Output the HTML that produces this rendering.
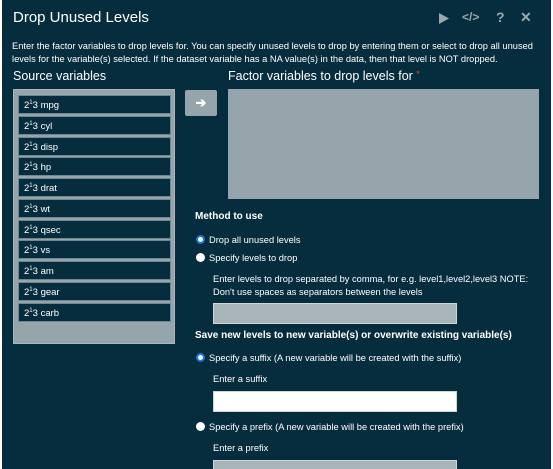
<!DOCTYPE html>
<html><head><style>
*{box-sizing:border-box;margin:0;padding:0}
html,body{width:553px;height:469px;overflow:hidden}
body{background:#fff;font-family:"Liberation Sans",sans-serif;position:relative}
#m{position:absolute;left:2px;top:0;width:549px;height:469px;background:#062d3e;color:#fff;overflow:hidden}
.a{position:absolute;white-space:nowrap}
.t{font-size:15px;left:11px;top:9px}
.d{font-size:9.3px;left:10px;top:40px;line-height:13px}
.h{font-size:12.5px}
#lb{position:absolute;left:11px;top:89px;width:162px;height:255px;background:#95a5ab;border:1px solid #a8b6ba}
.it{position:absolute;left:4px;width:153px;height:19px;background:#062d3e;border:1px solid #6f8790;font-size:9.5px;padding:4px 0 0 5px;line-height:11px}
.it sup{font-size:6px;line-height:0}
#btn{position:absolute;left:183px;top:90px;width:32px;height:26px;background:#95a5ab;border-radius:2px;color:#fff;font-size:13px;text-align:center;line-height:26px;font-weight:bold}
#rb{position:absolute;left:226px;top:89px;width:311px;height:110px;background:#95a5ab}
.s{font-size:9.3px}
.r{position:absolute;width:9px;height:9px;border-radius:50%;background:#fff}
.r.on{border:2.5px solid #1a73e8}
.in{position:absolute;left:211px;width:244px;height:21px;border:1px solid #cfd6d8}
</style></head><body><div id="m">
<div class="a t">Drop Unused Levels</div>
<svg class="a" style="left:436px;top:12px" width="12" height="13"><path d="M1 1 L11 6.5 L1 12Z" fill="#9aa9ae"/></svg>
<div class="a" style="left:460px;top:10px;font-size:12px;color:#9aa9ae;font-weight:bold">&lt;/&gt;</div>
<div class="a" style="left:494px;top:9px;font-size:14px;color:#9aa9ae;font-weight:bold">?</div>
<div class="a" style="left:518px;top:9px;font-size:14px;color:#9aa9ae;font-weight:bold">✕</div>
<div class="a d">Enter the factor variables to drop levels for. You can specify unused levels to drop by entering them or select to drop all unused<br>levels for the variable(s) selected. If the dataset variable has a NA value(s) in the data, then that level is NOT dropped.</div>
<div class="a h" style="left:11px;top:69px">Source variables</div>
<div class="a h" style="left:226px;top:69px">Factor variables to drop levels for <span style="color:#e04040;font-size:9px;vertical-align:top">*</span></div>
<div id="lb">
<div class="it" style="top:5px">2<sup>1</sup>3 mpg</div>
<div class="it" style="top:26px">2<sup>1</sup>3 cyl</div>
<div class="it" style="top:47px">2<sup>1</sup>3 disp</div>
<div class="it" style="top:67px">2<sup>1</sup>3 hp</div>
<div class="it" style="top:88px">2<sup>1</sup>3 drat</div>
<div class="it" style="top:109px">2<sup>1</sup>3 wt</div>
<div class="it" style="top:130px">2<sup>1</sup>3 qsec</div>
<div class="it" style="top:150px">2<sup>1</sup>3 vs</div>
<div class="it" style="top:171px">2<sup>1</sup>3 am</div>
<div class="it" style="top:192px">2<sup>1</sup>3 gear</div>
<div class="it" style="top:213px">2<sup>1</sup>3 carb</div>
</div>
<div id="btn">➔</div>
<div id="rb"></div>
<div class="a" style="left:193px;top:211px;font-size:10px;font-weight:bold">Method to use</div>
<div class="r on" style="left:194px;top:235px"></div>
<div class="a s" style="left:207px;top:235px">Drop all unused levels</div>
<div class="r" style="left:194px;top:253px"></div>
<div class="a s" style="left:207px;top:253px">Specify levels to drop</div>
<div class="a s" style="left:211px;top:273px;line-height:13px">Enter levels to drop separated by comma, for e.g. level1,level2,level3 NOTE:<br>Don't use spaces as separators between the levels</div>
<div class="in" style="top:303px;background:#a9b4b8"></div>
<div class="a" style="left:193px;top:330px;font-size:10px;font-weight:bold">Save new levels to new variable(s) or overwrite existing variable(s)</div>
<div class="r on" style="left:194px;top:353px"></div>
<div class="a s" style="left:207px;top:353px">Specify a suffix (A new variable will be created with the suffix)</div>
<div class="a s" style="left:211px;top:374px">Enter a suffix</div>
<div class="in" style="top:391px;background:#fff"></div>
<div class="r" style="left:194px;top:422px"></div>
<div class="a s" style="left:207px;top:422px">Specify a prefix (A new variable will be created with the prefix)</div>
<div class="a s" style="left:211px;top:443px">Enter a prefix</div>
<div class="in" style="top:460px;background:#a9b4b8"></div>
</div></body></html>
